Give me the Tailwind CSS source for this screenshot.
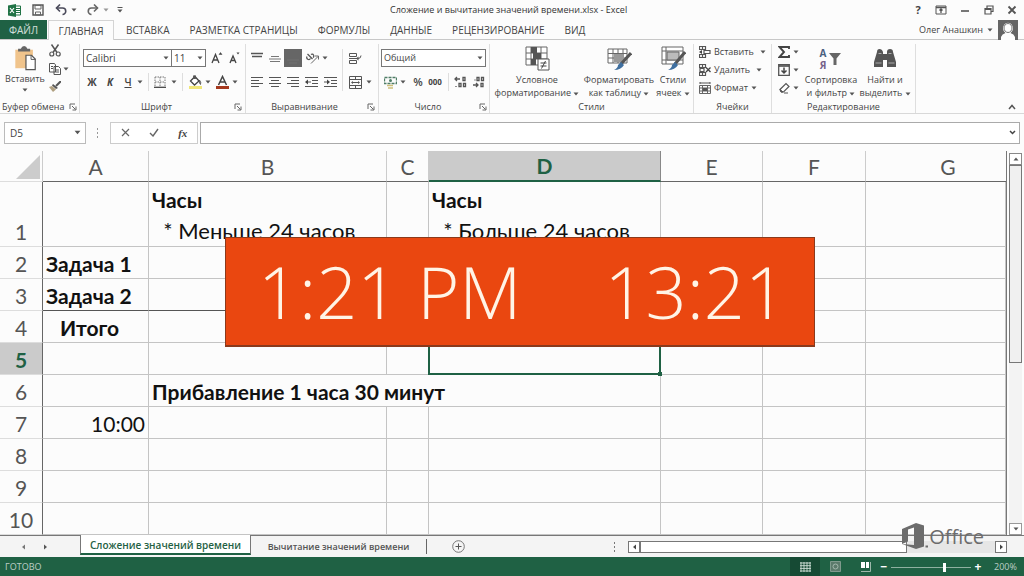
<!DOCTYPE html>
<html lang="ru">
<head>
<meta charset="utf-8">
<title>Сложение и вычитание значений времени.xlsx - Excel</title>
<script src="https://cdn.jsdelivr.net/npm/@tailwindcss/browser@4"></script>
</head>
<body class="flex h-screen flex-col overflow-hidden bg-[#fcfcfc] font-['Open_Sans','Noto_Sans',sans-serif] text-[10px] leading-3 text-[#444]">

<svg class="hidden" aria-hidden="true">
  <symbol id="dn" viewBox="0 0 6 4"><path d="M0.5 0.5h5L3 3.5z" fill="#555"/></symbol>
  <symbol id="launch" viewBox="0 0 8 8"><path d="M1 6V1h5M3 3l3.5 3.5M7 3.5V7H3.5" fill="none" stroke="#666"/></symbol>
</svg>

<header class="relative flex h-5 shrink-0 items-center justify-between">
  <div class="flex items-center pl-2">
    <svg class="h-[13px] w-[13px]" viewBox="0 0 13 13"><path d="M7 2h5.500v9H7" fill="#fff" stroke="#217346"/><path d="M8 4.500h4M8 6.500h4M8 8.500h4" stroke="#217346"/><path d="M0 1.500L8 0v13L0 11.500z" fill="#217346"/><path d="M2 4l4 5M6 4L2 9" stroke="#fff" stroke-width="1.200"/></svg>
    <button aria-label="Сохранить" class="ml-[11px]"><svg class="h-3 w-3" viewBox="0 0 12 12"><path d="M1 1h10v10H1z" fill="none" stroke="#555" stroke-width="1.400"/><path d="M3 1.500h6v3.500H3zM3.500 8h5v3h-5z" fill="none" stroke="#666"/></svg></button>
    <button aria-label="Отменить" class="ml-[11px]"><svg class="h-3 w-3" viewBox="0 0 12 12"><path d="M1.500 4h6a3 3 0 0 1 0 6.500" fill="none" stroke="#4a4a5a" stroke-width="1.600"/><path d="M5 0.500L1.500 4L5 7.500" fill="none" stroke="#4a4a5a" stroke-width="1.600"/></svg></button>
    <svg class="ml-1 h-1 w-[6px]"><use href="#dn"/></svg>
    <button aria-label="Повторить" class="ml-2.5"><svg class="h-3 w-3" viewBox="0 0 12 12"><path d="M10.500 4h-6a3 3 0 0 0 0 6.500" fill="none" stroke="#666" stroke-width="1.600"/><path d="M7 0.500L10.500 4L7 7.500" fill="none" stroke="#666" stroke-width="1.600"/></svg></button>
    <svg class="ml-1 h-1 w-[6px] opacity-60"><use href="#dn"/></svg>
    <svg class="ml-2 h-[6px] w-[6px]" viewBox="0 0 6 6"><path d="M0.500 .5h5" stroke="#555"/><path d="M0.500 2.500h5L3 5.500z" fill="#555"/></svg>
  </div>
  <h1 class="absolute left-[390px] top-1 whitespace-nowrap text-[9px] text-[#333]">Сложение и вычитание значений времени.xlsx - Excel</h1>
  <div class="flex items-center gap-3 pr-[7px]">
    <button aria-label="Справка" class="w-[10px] text-[11px] font-bold">?</button>
    <button aria-label="Параметры ленты"><svg class="h-[10px] w-3" viewBox="0 0 12 10"><path d="M1 1h10v8H1z" fill="none" stroke="#555"/><path d="M1 2.500h10M6 8V4M4.500 5.500L6 4l1.500 1.500" fill="none" stroke="#555" stroke-width="1.300"/></svg></button>
    <button aria-label="Свернуть" class="h-3 w-3"><svg class="h-3 w-3" viewBox="0 0 12 12"><path d="M2 7h8" stroke="#555" stroke-width="1.600"/></svg></button>
    <button aria-label="Восстановить"><svg class="h-3 w-3" viewBox="0 0 12 12"><path d="M2 4.500h6V10H2zM4 4V2h6v5.500H8M2 5.500h6" fill="none" stroke="#555" stroke-width="1.200"/></svg></button>
    <button aria-label="Закрыть"><svg class="h-[10px] w-[10px]" viewBox="0 0 10 10"><path d="M1.500 1.500l7 7M8.500 1.500l-7 7" stroke="#555" stroke-width="1.800"/></svg></button>
  </div>
</header>

<nav class="flex h-5 shrink-0 items-stretch border-b border-[#c8c8c8] font-medium">
  <button class="w-[47px] bg-[#1f6144] text-white/80">ФАЙЛ</button>
  <button class="-mb-px ml-px w-[66px] border border-b-0 border-[#d4d4d4] bg-[#fcfcfc]">ГЛАВНАЯ</button>
  <button class="ml-[2px] px-[10px]">ВСТАВКА</button>
  <button class="px-[10px]">РАЗМЕТКА СТРАНИЦЫ</button>
  <button class="px-[10px]">ФОРМУЛЫ</button>
  <button class="px-[10px]">ДАННЫЕ</button>
  <button class="px-[10px]">РЕЦЕНЗИРОВАНИЕ</button>
  <button class="px-[10px]">ВИД</button>
  <div class="ml-auto flex items-center pr-[6px]">
    <button class="flex items-center gap-1 text-[9px]">Олег Анашкин <svg class="h-1 w-[6px]"><use href="#dn"/></svg></button>
    <svg class="ml-[5px] h-5 w-5" viewBox="0 0 20 20"><path d="M0 0h20v20H0z" fill="#666"/><path d="M3 20v-3q1-3 4.500-4a5 5.500 0 1 1 5 0q3.500 1 4.500 4v3z" fill="#fff"/><path d="M6 8a4 4.500 0 0 0 8 0a4 4.500 0 0 0-8 0" fill="#fff" stroke="#777"/></svg>
  </div>
</nav>

<section aria-label="Лента" class="flex h-[74px] shrink-0 border-b border-[#d8d8d8] pt-1 text-[9px] font-medium">
  <!-- Буфер обмена -->
  <div class="flex w-20 shrink-0 flex-col justify-between border-r border-[#dedede]">
    <div class="flex pl-[5px]">
      <button class="flex w-10 flex-col items-center pt-[2px]">
        <svg class="h-[25px] w-[23px]" viewBox="0 0 24 27"><path d="M1 4h19v20H1z" fill="#f0c48c"/><path d="M4 6V3h3q1-3 3.500-3T14 3h3v3z" fill="#666"/><path d="M12.500 10h6l4 4v11.500h-10z" fill="#fff" stroke="#555" stroke-width="1.300"/><path d="M18 10v4.500h5" fill="none" stroke="#555"/></svg>
        <span class="mt-[2px]">Вставить</span>
        <svg class="mt-[3px] h-1 w-[6px]"><use href="#dn"/></svg>
      </button>
      <div class="flex flex-col gap-[6px] pl-1">
        <button aria-label="Вырезать"><svg class="h-[13px] w-3" viewBox="0 0 12 13"><path d="M2.500 0.500L8 8.500M9.500 0.500L4 8.500" stroke="#555" stroke-width="1.500"/><circle cx="2.800" cy="10" r="2" fill="none" stroke="#555" stroke-width="1.200"/><circle cx="9.200" cy="10" r="2" fill="none" stroke="#555" stroke-width="1.200"/></svg></button>
        <button aria-label="Копировать" class="flex items-center gap-[2px]"><svg class="h-3 w-3" viewBox="0 0 12 12"><path d="M.5 .5h5l1 1.500v7h-6zM5 3.500h4.500l2 2v6H5z" fill="#fff" stroke="#555"/><path d="M2 3.500h2M2 5.500h2M6.500 7h3.500M6.500 9h3.500" stroke="#555"/></svg><svg class="h-1 w-[6px]"><use href="#dn"/></svg></button>
        <button aria-label="Формат по образцу"><svg class="h-[11px] w-3" viewBox="0 0 12 11"><path d="M12 0L7 5" stroke="#555" stroke-width="2"/><path d="M4 3l5 4-2 1-4-3.500z" fill="#555"/><path d="M0 6l3-1 4 3.500L4 11z" fill="#b0a080"/></svg></button>
      </div>
    </div>
    <div class="flex items-center justify-between pl-[2px] pr-[2px]"><span>Буфер обмена</span><svg class="h-2 w-2"><use href="#launch"/></svg></div>
  </div>

  <!-- Шрифт -->
  <div class="flex w-[166px] shrink-0 flex-col justify-between border-r border-[#dedede] pl-[3px]">
    <div class="flex flex-col gap-[6px] pt-[5px]">
      <div class="flex items-center">
        <div class="relative"><select aria-label="Шрифт" class="block h-[18px] w-[89px] appearance-none border border-[#777] bg-white pl-[2px] text-[10px]"><option>Calibri</option></select><svg class="pointer-events-none absolute right-[3px] top-[7px] h-1 w-[6px]"><use href="#dn"/></svg></div>
        <div class="relative"><select aria-label="Размер шрифта" class="-ml-px block h-[18px] w-[35px] appearance-none border border-[#777] bg-white pl-[2px] text-[10px]"><option>11</option></select><svg class="pointer-events-none absolute right-[3px] top-[7px] h-1 w-[6px]"><use href="#dn"/></svg></div>
        <button aria-label="Увеличить размер" class="ml-[5px] h-[18px] w-3"><svg class="h-3 w-3" viewBox="0 0 12 12"><path d="M1 11L4.500 2.500L8 11M2.200 8h4.600" fill="none" stroke="#444" stroke-width="1.300"/><path d="M8 2.500L9.500 .5L11 2.500z" fill="#444" stroke="#444" stroke-width=".5"/></svg></button>
        <button aria-label="Уменьшить размер" class="ml-[6px] h-[18px] w-3"><svg class="h-3 w-3" viewBox="0 0 12 12"><path d="M1 11L4 4L7 11M2 8.500h4" fill="none" stroke="#444" stroke-width="1.300"/><path d="M7.500 .5h3L9 2.500z" fill="#444"/></svg></button>
      </div>
      <div class="flex h-[18px] items-center text-[10px]">
        <button class="w-[18px] font-bold">Ж</button><button class="w-[18px] font-bold italic">К</button><button class="w-[18px] font-semibold underline">Ч</button>
        <svg class="h-1 w-[6px]"><use href="#dn"/></svg>
        <span class="mx-[5px] h-[18px] w-px bg-[#dedede]"></span>
        <button aria-label="Границы" class="flex w-[27px] items-center justify-between"><svg class="h-3 w-3" viewBox="0 0 12 12"><path d="M1 1h10v10M1 1v10M6 1v10M1 6h10" fill="none" stroke="#777" stroke-dasharray="1.500 1"/><path d="M0 11.300h12" stroke="#444" stroke-width="1.300"/></svg><svg class="mr-[4px] h-1 w-[6px]"><use href="#dn"/></svg></button>
        <span class="ml-[1px] mr-[6px] h-[18px] w-px bg-[#dedede]"></span>
        <button aria-label="Цвет заливки" class="flex items-center gap-[3px]"><svg class="h-[14px] w-[13px]" viewBox="0 0 13 14"><path d="M1.500 6L6 1.500L10 6L5.500 10z" fill="#fff" stroke="#444" stroke-width="1.300"/><path d="M4.500 4V.8h2V4M10.500 5q2 2.500 1 4.500q-1.500-1-1-4.500" fill="#555" stroke="#555" stroke-width=".8"/><path d="M0 11h13v3H0z" fill="#f0e678"/></svg><svg class="h-1 w-[6px]"><use href="#dn"/></svg></button>
        <button aria-label="Цвет текста" class="ml-[5px] flex items-center gap-[3px]"><svg class="h-[14px] w-[13px]" viewBox="0 0 13 14"><path d="M2.500 10L6.500 1.500L10.500 10M4 7h5" fill="none" stroke="#444" stroke-width="1.500"/><path d="M0 11h13v3H0z" fill="#a5391e"/></svg><svg class="h-1 w-[6px]"><use href="#dn"/></svg></button>
      </div>
    </div>
    <div class="flex items-center pr-[3px]"><span class="flex-1 pr-1 text-center">Шрифт</span><svg class="h-2 w-2"><use href="#launch"/></svg></div>
  </div>

  <!-- Выравнивание -->
  <div class="flex w-[133px] shrink-0 flex-col justify-between border-r border-[#dedede]">
    <div class="flex pl-[2px] pt-[5px]">
      <div class="flex w-[94px] flex-col gap-[6px]">
        <div class="flex items-center">
          <button aria-label="По верхнему краю" class="w-[18px]"><svg class="mx-auto h-3 w-3" viewBox="0 0 12 12"><path d="M0 1.500h12M1 4.500h10" stroke="#555" stroke-width="1.300"/></svg></button>
          <button aria-label="По середине" class="w-[18px]"><svg class="mx-auto h-3 w-3" viewBox="0 0 12 12"><path d="M2 4.500h8M0 7h12M1 9.500h10" stroke="#777"/></svg></button>
          <button aria-label="По нижнему краю" class="h-[18px] w-[18px] bg-[#666]"><svg class="mx-auto h-3 w-3" viewBox="0 0 12 12"><path d="M0 8h12M2 11h8" stroke="#707070"/></svg></button>
          <button aria-label="Ориентация" class="ml-[4px] flex items-center gap-[3px]"><svg class="h-3 w-[13px]" viewBox="0 0 13 12"><path d="M5 11.500L12 4.500M12.500 7.500V4H9" fill="none" stroke="#666"/><path d="M1 4.500a2 2 0 1 0 3.500 2M1.500 2l5 5M5 2.500a1.800 1.800 0 1 1 2 3" fill="none" stroke="#555" stroke-width="1.300"/></svg><svg class="h-1 w-[6px]"><use href="#dn"/></svg></button>
        </div>
        <div class="flex h-[18px] items-center">
          <button aria-label="По левому краю" class="w-[18px]"><svg class="mx-auto h-3 w-3" viewBox="0 0 12 12"><path d="M0 1.500h12M0 4.500h8M0 7.500h12M0 10.500h8" stroke="#555"/></svg></button>
          <button aria-label="По центру" class="w-[18px]"><svg class="mx-auto h-3 w-3" viewBox="0 0 12 12"><path d="M0 1.500h12M2 4.500h8M0 7.500h12M2 10.500h8" stroke="#555"/></svg></button>
          <button aria-label="По правому краю" class="w-[18px]"><svg class="mx-auto h-3 w-3" viewBox="0 0 12 12"><path d="M0 1.500h12M4 4.500h8M0 7.500h12M4 10.500h8" stroke="#555"/></svg></button>
          <button aria-label="Уменьшить отступ" class="w-[19px]"><svg class="mx-auto h-3 w-[13px]" viewBox="0 0 13 12"><path d="M0 1.500h13M7 4.500h6M7 7.500h6M0 10.500h13M1 6h5" stroke="#555"/><path d="M0 6l3-2.500v5z" fill="#444"/></svg></button>
          <button aria-label="Увеличить отступ" class="w-[18px]"><svg class="mx-auto h-3 w-[13px]" viewBox="0 0 13 12"><path d="M0 1.500h13M7 4.500h6M7 7.500h6M0 10.500h13M0 6h5" stroke="#555"/><path d="M6 6L3 3.500v5z" fill="#444"/></svg></button>
        </div>
      </div>
      <span class="h-[42px] w-px bg-[#dedede]"></span>
      <div class="flex flex-col gap-[6px] pl-[6px]">
        <button aria-label="Перенести текст" class="flex h-[18px] items-center"><svg class="h-[13px] w-[13px]" viewBox="0 0 13 13"><path d="M.5 1.500h7v3h-7zM.5 8.500h7v3h-7zM0 6.500h9q3 0 3-3" fill="none" stroke="#555"/><path d="M7 6.500l2.500-2v4z" fill="#555"/></svg></button>
        <button aria-label="Объединить" class="flex h-[18px] items-center gap-[4px]"><svg class="h-[13px] w-[13px]" viewBox="0 0 13 13"><path d="M.5 .5h12v12H.5zM.5 3.500h12M.5 9.500h12M6.500 .5v3M6.500 9.500v3M3 6.500h7" fill="none" stroke="#555"/><path d="M2 6.500l2-1.500v3zM11 6.500L9 5v3z" fill="#555"/></svg><svg class="h-1 w-[6px]"><use href="#dn"/></svg></button>
      </div>
    </div>
    <div class="flex items-center pr-[3px]"><span class="flex-1 pr-1 text-center">Выравнивание</span><svg class="h-2 w-2"><use href="#launch"/></svg></div>
  </div>

  <!-- Число -->
  <div class="flex w-[111px] shrink-0 flex-col justify-between border-r border-[#dedede] pl-[2px]">
    <div class="flex flex-col gap-[6px] pt-[5px]">
      <div class="relative w-[105px]"><select aria-label="Числовой формат" class="block h-[18px] w-full appearance-none border border-[#777] bg-white pl-[2px] text-[9px]"><option>Общий</option></select><svg class="pointer-events-none absolute right-[3px] top-[7px] h-1 w-[6px]"><use href="#dn"/></svg></div>
      <div class="flex h-[18px] items-center">
        <button aria-label="Финансовый формат" class="ml-[3px] flex items-center gap-[3px]"><svg class="h-[13px] w-[13px]" viewBox="0 0 13 13"><path d="M.5 1.500h12v6H.5z" fill="none" stroke="#4f7d66" stroke-width="1.300" stroke-dasharray="3 1"/><circle cx="6.500" cy="4.500" r="1.500" fill="#4f7d66"/><path d="M3 9.500h6M4 12h5" stroke="#cdbf7a" stroke-width="1.500"/></svg><svg class="h-1 w-[6px]"><use href="#dn"/></svg></button>
        <button class="ml-[5px] w-[14px] text-[11px] font-semibold">%</button>
        <button class="ml-[2px] w-[16px] text-[8px] font-bold">000</button>
        <span class="mx-[5px] h-[18px] w-px bg-[#dedede]"></span>
        <button aria-label="Увеличить разрядность" class="w-[13px]"><svg class="h-3 w-[13px]" viewBox="0 0 13 12"><path d="M1 3h5M3 1L1 3l2 2M2 11v-1" fill="none" stroke="#555" stroke-width="1.300"/><path d="M9 1.500h2v3H9zM5 7.500h2v3H5zM9.500 7.500h2v3h-2z" fill="none" stroke="#555" stroke-width="1.300"/></svg></button>
        <button aria-label="Уменьшить разрядность" class="ml-[5px] w-[13px]"><svg class="h-3 w-[13px]" viewBox="0 0 13 12"><path d="M1 9h5M4 7l2 2-2 2M3 4.500v-1" fill="none" stroke="#555" stroke-width="1.300"/><path d="M5 1.500h2v3H5zM9.500 1.500h2v3h-2zM9 7.500h2v3H9z" fill="none" stroke="#555" stroke-width="1.300"/></svg></button>
      </div>
    </div>
    <div class="flex items-center pr-[2px]"><span class="flex-1 pr-1 text-center">Число</span><svg class="h-2 w-2"><use href="#launch"/></svg></div>
  </div>

  <!-- Стили -->
  <div class="flex w-[204px] shrink-0 flex-col justify-between border-r border-[#dedede] text-center">
    <div class="flex pt-[2px]">
      <button class="flex w-[94px] flex-col items-center gap-[2px]"><svg class="h-[25px] w-[25px]" viewBox="0 0 25 25"><path d="M1 1h21v18H1zM1 7h21M1 13h21M6 1v18M16 1v18" fill="#fff" stroke="#666"/><path d="M6 1h6v6H6zM8 7h8v6H8zM6 13h5v6H6z" fill="#555"/><path d="M13 13h11v11H13z" fill="#fff" stroke="#555"/><path d="M15.500 17h6M15.500 20h6M20.500 15l-4 7.500" stroke="#444"/></svg><span class="leading-[13px]">Условное<br><span class="whitespace-nowrap">форматирование <svg class="inline h-1 w-[6px]"><use href="#dn"/></svg></span></span></button>
      <button class="flex w-[70px] flex-col items-center gap-[2px]"><svg class="h-[25px] w-[25px]" viewBox="0 0 25 25"><path d="M1 3h19v14H1zM1 7.500h19M1 12h19M6 3v14M11 3v14M16 3v14" fill="#fff" stroke="#666"/><path d="M7 8h10v8H7z" fill="#999"/><path d="M24 7L14 18" stroke="#555" stroke-width="3"/><path d="M14 16l3 3q-3 5-10 5q4-2 4-5z" fill="#3f6f9f"/></svg><span class="leading-[13px]">Форматировать<br><span class="whitespace-nowrap">как таблицу <svg class="inline h-1 w-[6px]"><use href="#dn"/></svg></span></span></button>
      <button class="flex w-[38px] flex-col items-center gap-[2px]"><svg class="h-[25px] w-[25px]" viewBox="0 0 25 25"><path d="M1 1h21v17H1zM1 5h21M5 1v17M1 14h21" fill="#fff" stroke="#666"/><path d="M6 6h12v8H6z" fill="#bbb" stroke="#666"/><path d="M24 6L14 18" stroke="#555" stroke-width="3"/><path d="M14 16l3 3q-3 5-10 5q4-2 4-5z" fill="#3f6f9f"/></svg><span class="leading-[13px]">Стили<br><span class="whitespace-nowrap">ячеек <svg class="inline h-1 w-[6px]"><use href="#dn"/></svg></span></span></button>
    </div>
    <span>Стили</span>
  </div>

  <!-- Ячейки -->
  <div class="flex w-[78px] shrink-0 flex-col justify-between border-r border-[#dedede]">
    <div class="flex flex-col gap-[6px] pl-[5px] pt-[2px]">
      <button class="flex items-center gap-[3px] whitespace-nowrap"><svg class="h-3 w-3" viewBox="0 0 12 12"><path d="M.5 .5h6v3h-6zM.5 8.500h6v3h-6zM3.500 .5v3M3.500 8.500v3M5 4.500h6v3H5z" fill="none" stroke="#555" stroke-width="1.200"/><path d="M0 6l3-2v4z" fill="#444"/></svg>Вставить <svg class="ml-[3px] h-1 w-[6px]"><use href="#dn"/></svg></button>
      <button class="flex items-center gap-[3px] whitespace-nowrap"><svg class="h-3 w-3" viewBox="0 0 12 12"><path d="M.5 .5h6v3h-6zM.5 8.500h6v3h-6zM3.500 .5v3M3.500 8.500v3M1 4.500h4v3H1z" fill="none" stroke="#555" stroke-width="1.200"/><path d="M7 3.500l4.500 4.500M11.500 3.500L7 8" stroke="#444" stroke-width="1.300"/></svg>Удалить <svg class="ml-[3px] h-1 w-[6px]"><use href="#dn"/></svg></button>
      <button class="flex items-center gap-[3px] whitespace-nowrap"><svg class="h-3 w-3" viewBox="0 0 12 12"><path d="M.5 3.500h11v8H.5zM.5 6h11M.5 9h11M3.500 3.500v8M8.500 3.500v8" fill="none" stroke="#666"/><path d="M4 6h4v3H4z" fill="#555"/><path d="M1 1h10M1 0v2M11 0v2" stroke="#555"/></svg>Формат <svg class="h-1 w-[6px]"><use href="#dn"/></svg></button>
    </div>
    <span class="text-center">Ячейки</span>
  </div>

  <!-- Редактирование -->
  <div class="flex w-[144px] shrink-0 flex-col justify-between border-r border-[#dedede] text-center">
    <div class="flex pl-[6px] pt-[2px]">
      <div class="flex w-[24px] flex-col gap-[6px]">
        <button aria-label="Сумма" class="flex items-center gap-[3px]"><svg class="h-3 w-3" viewBox="0 0 12 12"><path d="M11 3V1H1.500L6 6L1.500 11H11V9" fill="none" stroke="#444" stroke-width="1.900"/></svg><svg class="h-1 w-[6px]"><use href="#dn"/></svg></button>
        <button aria-label="Заполнить" class="flex items-center gap-[3px]"><svg class="h-3 w-3" viewBox="0 0 12 12"><path d="M.7 .7h10.600v10.600H.7z" fill="none" stroke="#555" stroke-width="1.300"/><path d="M1 2h10M6 3.500v5M3.500 6.500L6 9l2.500-2.500" fill="none" stroke="#444" stroke-width="1.500"/></svg><svg class="h-1 w-[6px]"><use href="#dn"/></svg></button>
        <button aria-label="Очистить" class="flex items-center gap-[3px]"><svg class="h-3 w-3" viewBox="0 0 12 12"><path d="M2 7.500L8 1.500l3 3L5.500 10H3.500z" fill="#fff" stroke="#555" stroke-width="1.200"/><path d="M2 7.500l3 2.500H3z" fill="#555" stroke="#555"/><path d="M6 11h4" stroke="#555"/></svg><svg class="h-1 w-[6px]"><use href="#dn"/></svg></button>
      </div>
      <button class="flex w-[58px] flex-col items-center gap-[2px]"><span class="flex h-[25px] items-center"><span class="flex flex-col text-[10px] font-bold leading-3"><span class="text-[#4a6080]">А</span><span class="text-[#76608a]">Я</span></span><svg class="ml-[2px] h-[14px] w-[14px]" viewBox="0 0 14 14"><path d="M1 1h12L8.500 6.500V13h-3V6.500z" fill="#666"/></svg></span><span class="leading-[13px]">Сортировка<br><span class="whitespace-nowrap">и фильтр <svg class="inline h-1 w-[6px]"><use href="#dn"/></svg></span></span></button>
      <button class="flex w-[50px] flex-col items-center gap-[2px]"><svg class="h-[25px] w-[22px]" viewBox="0 0 22 25"><path d="M3 6q0-3 2.500-3T9 6v2h4V6q0-3 3-3t3 3l3 10v5h-9v-7H9v7H0v-5z" fill="#555"/><path d="M4.500 7.500h3M14.500 7.500h3M1.500 17h6M14.500 17h6" stroke="#aaa"/></svg><span class="leading-[13px]">Найти и<br><span class="whitespace-nowrap">выделить <svg class="inline h-1 w-[6px]"><use href="#dn"/></svg></span></span></button>
    </div>
    <span>Редактирование</span>
  </div>
  <button aria-label="Свернуть ленту" class="ml-auto mr-2 self-end pb-[3px]"><svg class="h-[6px] w-2" viewBox="0 0 8 6"><path d="M1 5l3-3.500L7 5" fill="none" stroke="#555" stroke-width="1.500"/></svg></button>
</section>

<div class="flex h-[37px] shrink-0 items-center pl-1 pr-[4px]">
  <div class="relative"><input aria-label="Имя" value="D5" class="block h-[22px] w-[82px] border border-[#bbb] bg-white pl-[5px] text-[10px]"><svg class="pointer-events-none absolute right-[5px] top-[8px] h-[5px] w-[7px]"><use href="#dn"/></svg></div>
  <svg class="ml-[10px] h-[10px] w-[3px]" viewBox="0 0 3 10"><path d="M1.500 0v2M1.500 4v2M1.500 8v2" stroke="#999"/></svg>
  <div class="ml-[11px] flex h-[22px] w-[88px] items-center justify-around border border-[#ccc] bg-white">
    <button aria-label="Отмена"><svg class="h-[9px] w-[9px]" viewBox="0 0 9 9"><path d="M1 1l7 7M8 1L1 8" stroke="#666" stroke-width="1.200"/></svg></button>
    <button aria-label="Ввод"><svg class="h-[9px] w-[10px]" viewBox="0 0 10 9"><path d="M1 5l3 3l5-7" fill="none" stroke="#666" stroke-width="1.400"/></svg></button>
    <button aria-label="Вставить функцию" class="font-['Liberation_Serif',serif] text-[11px] font-bold italic">fx</button>
  </div>
  <div class="relative ml-[2px] flex-1"><input aria-label="Строка формул" class="block h-[22px] w-full border border-[#aaa] bg-white"><svg class="pointer-events-none absolute right-[4px] top-[8px] h-[5px] w-[7px]" viewBox="0 0 7 5"><path d="M1 1l2.500 2.500L6 1" fill="none" stroke="#444" stroke-width="1.500"/></svg></div>
</div>

<main class="relative flex min-h-0 flex-1 overflow-hidden">
  <div class="min-w-0 flex-1">
  <table class="w-full table-fixed border-separate border-spacing-0 border-r border-[#777] font-['Lato','Open_Sans',sans-serif] text-[21px] leading-[29px] text-[#111]">
    <colgroup><col class="w-[43px]"><col class="w-[106px]"><col class="w-[238px]"><col class="w-[42px]"><col class="w-[232px]"><col class="w-[102px]"><col class="w-[103px]"><col></colgroup>
    <thead class="leading-7 text-[#555]">
      <tr class="h-[31px] *:border-b *:border-r *:border-b-[#666] *:border-r-[#ccc] *:px-0 *:pb-0 *:pt-px *:font-normal">
        <th class="border-b-[#ddd]!"><svg class="ml-auto mr-[2px] h-6 w-6" viewBox="0 0 24 24"><path d="M24 0v24H0z" fill="#ccc"/></svg></th>
        <th>A</th><th>B</th><th>C</th><th class="border-b-2! border-b-[#1f6144]! border-r-[#888]! bg-[#cbcbcb] font-bold! text-[#1f6144]">D</th><th>E</th><th>F</th><th class="border-r-0! pl-6!">G</th>
      </tr>
    </thead>
    <tbody class="[&_td]:border-b [&_td]:border-r [&_td]:border-[#c4c4c4] [&_td]:px-0 [&_td]:pb-0 [&_td]:pt-[2px] [&_th]:border-b [&_th]:border-r [&_th]:border-b-[#ddd] [&_th]:border-r-[#666] [&_th]:px-0 [&_th]:pb-0 [&_th]:pt-[2px] [&_th]:font-normal [&_th]:text-[#555]">
      <tr class="h-[65px] align-bottom"><th>1</th><td></td><td class="whitespace-pre pl-[3px]! align-top leading-[31px]"><b>Часы</b><br><span class="text-[22px]">  * Меньше 24 часов</span></td><td></td><td class="whitespace-pre pl-[3px]! align-top leading-[31px]"><b>Часы</b><br><span class="text-[22px]">  * Больше 24 часов</span></td><td></td><td></td><td></td></tr>
      <tr class="h-8"><th>2</th><td class="whitespace-nowrap pl-[3px]! font-bold">Задача 1</td><td></td><td></td><td></td><td></td><td></td><td></td></tr>
      <tr class="h-8"><th>3</th><td class="whitespace-nowrap border-b-[#555]! pl-[3px]! font-bold">Задача 2</td><td class="border-b-[#555]!"></td><td class="border-b-[#555]!"></td><td class="border-b-[#555]!"></td><td></td><td></td><td></td></tr>
      <tr class="h-8"><th>4</th><td class="pr-3! text-center font-bold">Итого</td><td></td><td></td><td></td><td></td><td></td><td></td></tr>
      <tr class="h-8"><th class="bg-[#cbcbcb] font-bold! text-[#1f6144]!">5</th><td></td><td></td><td></td><td class="relative"><span class="absolute -bottom-px -left-px -right-px -top-px border-2 border-[#1f6144]"></span><span class="absolute -bottom-[2px] -right-[2px] h-1 w-1 bg-[#1f6144]"></span></td><td></td><td></td><td></td></tr>
      <tr class="h-8"><th>6</th><td></td><td colspan="3" class="pl-[3px]! font-bold">Прибавление 1 часа 30 минут</td><td></td><td></td><td></td></tr>
      <tr class="h-8"><th>7</th><td class="pr-[3px]! text-right">10:00</td><td></td><td></td><td></td><td></td><td></td><td></td></tr>
      <tr class="h-8"><th>8</th><td></td><td></td><td></td><td></td><td></td><td></td><td></td></tr>
      <tr class="h-8"><th>9</th><td></td><td></td><td></td><td></td><td></td><td></td><td></td></tr>
      <tr class="h-8"><th>10</th><td></td><td></td><td></td><td></td><td></td><td></td><td></td></tr>
    </tbody>
  </table>
  </div>

  <div class="ml-[2px] mr-[2px] flex w-[13px] shrink-0 flex-col pt-[2px]">
    <button aria-label="Вверх" class="flex h-3 items-center justify-center border border-[#888] bg-white"><svg class="h-1 w-[6px] rotate-180"><use href="#dn"/></svg></button>
    <div class="h-[198px] border border-[#777] bg-[#f0f0f0]"></div>
    <div class="flex-1 bg-[#f3f3f3]"></div>
    <button aria-label="Вниз" class="flex h-3 items-center justify-center border border-[#999] bg-white"><svg class="h-1 w-[6px]"><use href="#dn"/></svg></button>
  </div>

  <!-- Плашка с двумя форматами времени поверх листа -->
  <div class="absolute left-[225px] top-[86px] flex h-[110px] w-[590px] items-center justify-between border border-b-2 border-[#8a3a1c] bg-[#ea4710] pb-[2px] pl-8 pr-7 text-[72px] font-light leading-none text-[#fff4e6]">
    <span>1:21 PM</span><span>13:21</span>
  </div>
</main>

<footer class="relative shrink-0">
  <div class="flex h-[22px] items-stretch border-t border-[#777] bg-[#f4f4f4] text-[10px]">
    <div class="flex w-20 items-center gap-[17px] pl-[21px]">
      <button aria-label="Предыдущий лист"><svg class="block h-[6px] w-[5px]" viewBox="0 0 5 6"><path d="M4 .5v5L1 3z" fill="#777"/></svg></button>
      <button aria-label="Следующий лист"><svg class="block h-[6px] w-[5px]" viewBox="0 0 5 6"><path d="M1 .5v5L4 3z" fill="#555"/></svg></button>
    </div>
    <button class="-mt-px mb-[2px] w-[171px] whitespace-nowrap border-x border-b-2 border-x-[#777] border-b-[#1f6144] bg-white pt-[2px] text-[10px] font-semibold text-[#1f6144]">Сложение значений времени</button>
    <button class="w-[175px] whitespace-nowrap text-[9px] font-semibold text-[#555]">Вычитание значений времени</button>
    <span class="my-[3px] w-px bg-[#666]"></span>
    <button aria-label="Новый лист" class="ml-[25px]"><svg class="h-[13px] w-[13px]" viewBox="0 0 13 13"><circle cx="6.500" cy="6.500" r="5.800" fill="none" stroke="#777"/><path d="M6.500 3.500v6M3.500 6.500h6" stroke="#555"/></svg></button>
    <div class="ml-auto flex items-center pr-[17px]">
      <svg class="mr-3 h-[10px] w-[3px]" viewBox="0 0 3 10"><path d="M1.500 0v2M1.500 4v2M1.500 8v2" stroke="#777"/></svg>
      <button aria-label="Влево" class="flex h-3 w-3 items-center justify-center border border-[#777] bg-white"><svg class="h-[6px] w-[5px]" viewBox="0 0 5 6"><path d="M4 .5v5L1 3z" fill="#444"/></svg></button>
      <div class="h-3 w-[267px] border border-[#777] bg-white"></div>
      <div class="h-3 w-[88px] bg-[#e6e6e6]"></div>
      <button aria-label="Вправо" class="flex h-3 w-3 items-center justify-center border border-[#777] bg-white"><svg class="h-[6px] w-[5px]" viewBox="0 0 5 6"><path d="M1 .5v5L4 3z" fill="#444"/></svg></button>
    </div>
  </div>
  <div class="flex h-[19px] items-center bg-[#1f6144] text-[9px] text-white/70">
    <span class="pl-[5px]">ГОТОВО</span>
    <div class="ml-auto flex items-center pr-2">
      <button aria-label="Обычный" class="flex h-[19px] w-[30px] items-center justify-center bg-[#164a34]"><svg class="h-[10px] w-[11px]" viewBox="0 0 11 10"><path d="M0 1h11M0 3.700h11M0 6.400h11M0 9h11M1 0v10M4 0v10M7 0v10M10 0v10" stroke="#cfe0d7" stroke-width=".9"/></svg></button>
      <button aria-label="Разметка страницы" class="ml-[10px]"><svg class="h-[11px] w-[11px]" viewBox="0 0 11 11"><path d="M.5 .5h10v10H.5z" fill="#5b7a6b" stroke="#7f9a8d"/><circle cx="5.500" cy="5.500" r="2.500" fill="none" stroke="#a3b8ad"/></svg></button>
      <button aria-label="Страничный" class="ml-[20px]"><svg class="h-[10px] w-[11px]" viewBox="0 0 11 10"><path d="M0 0h4v6H0zM5 0h3v6H5z" fill="#fff"/><path d="M9.500 0v9.500H0" fill="none" stroke="#9db8aa"/></svg></button>
      <button class="ml-2 w-[8px] text-[12px] font-bold text-white">−</button>
      <div class="relative mx-[3px] h-3 w-[80px]"><input type="range" aria-label="Масштаб" min="0" max="100" value="66" class="absolute inset-0 h-3 w-full appearance-none bg-transparent opacity-0"><span class="pointer-events-none absolute left-0 right-0 top-[6px] h-px bg-[#8fb0a0]"></span><span class="pointer-events-none absolute left-[52px] top-[2px] h-[9px] w-[3px] bg-white"></span></div>
      <button class="w-[8px] text-[12px] font-bold text-white">+</button>
      <span class="ml-3 w-[22px]">200%</span>
    </div>
  </div>
  <!-- Логотип Office -->
  <div class="absolute right-[40px] top-[-12px] flex items-center text-[#6c6c6c]">
    <svg class="h-[27px] w-[27px]" viewBox="0 0 27 27"><path d="M0 6L14 0l8 2.500v21L14 26L0 21l12 1V4.500L6 6.500V18.500L0 21z" fill="#6c6c6c"/><path d="M23.500 22.500h2.500v2h-2.500z" fill="#6c6c6c"/></svg>
    <span class="text-[20px] font-medium leading-6">Office</span>
  </div>
</footer>
</body>
</html>
